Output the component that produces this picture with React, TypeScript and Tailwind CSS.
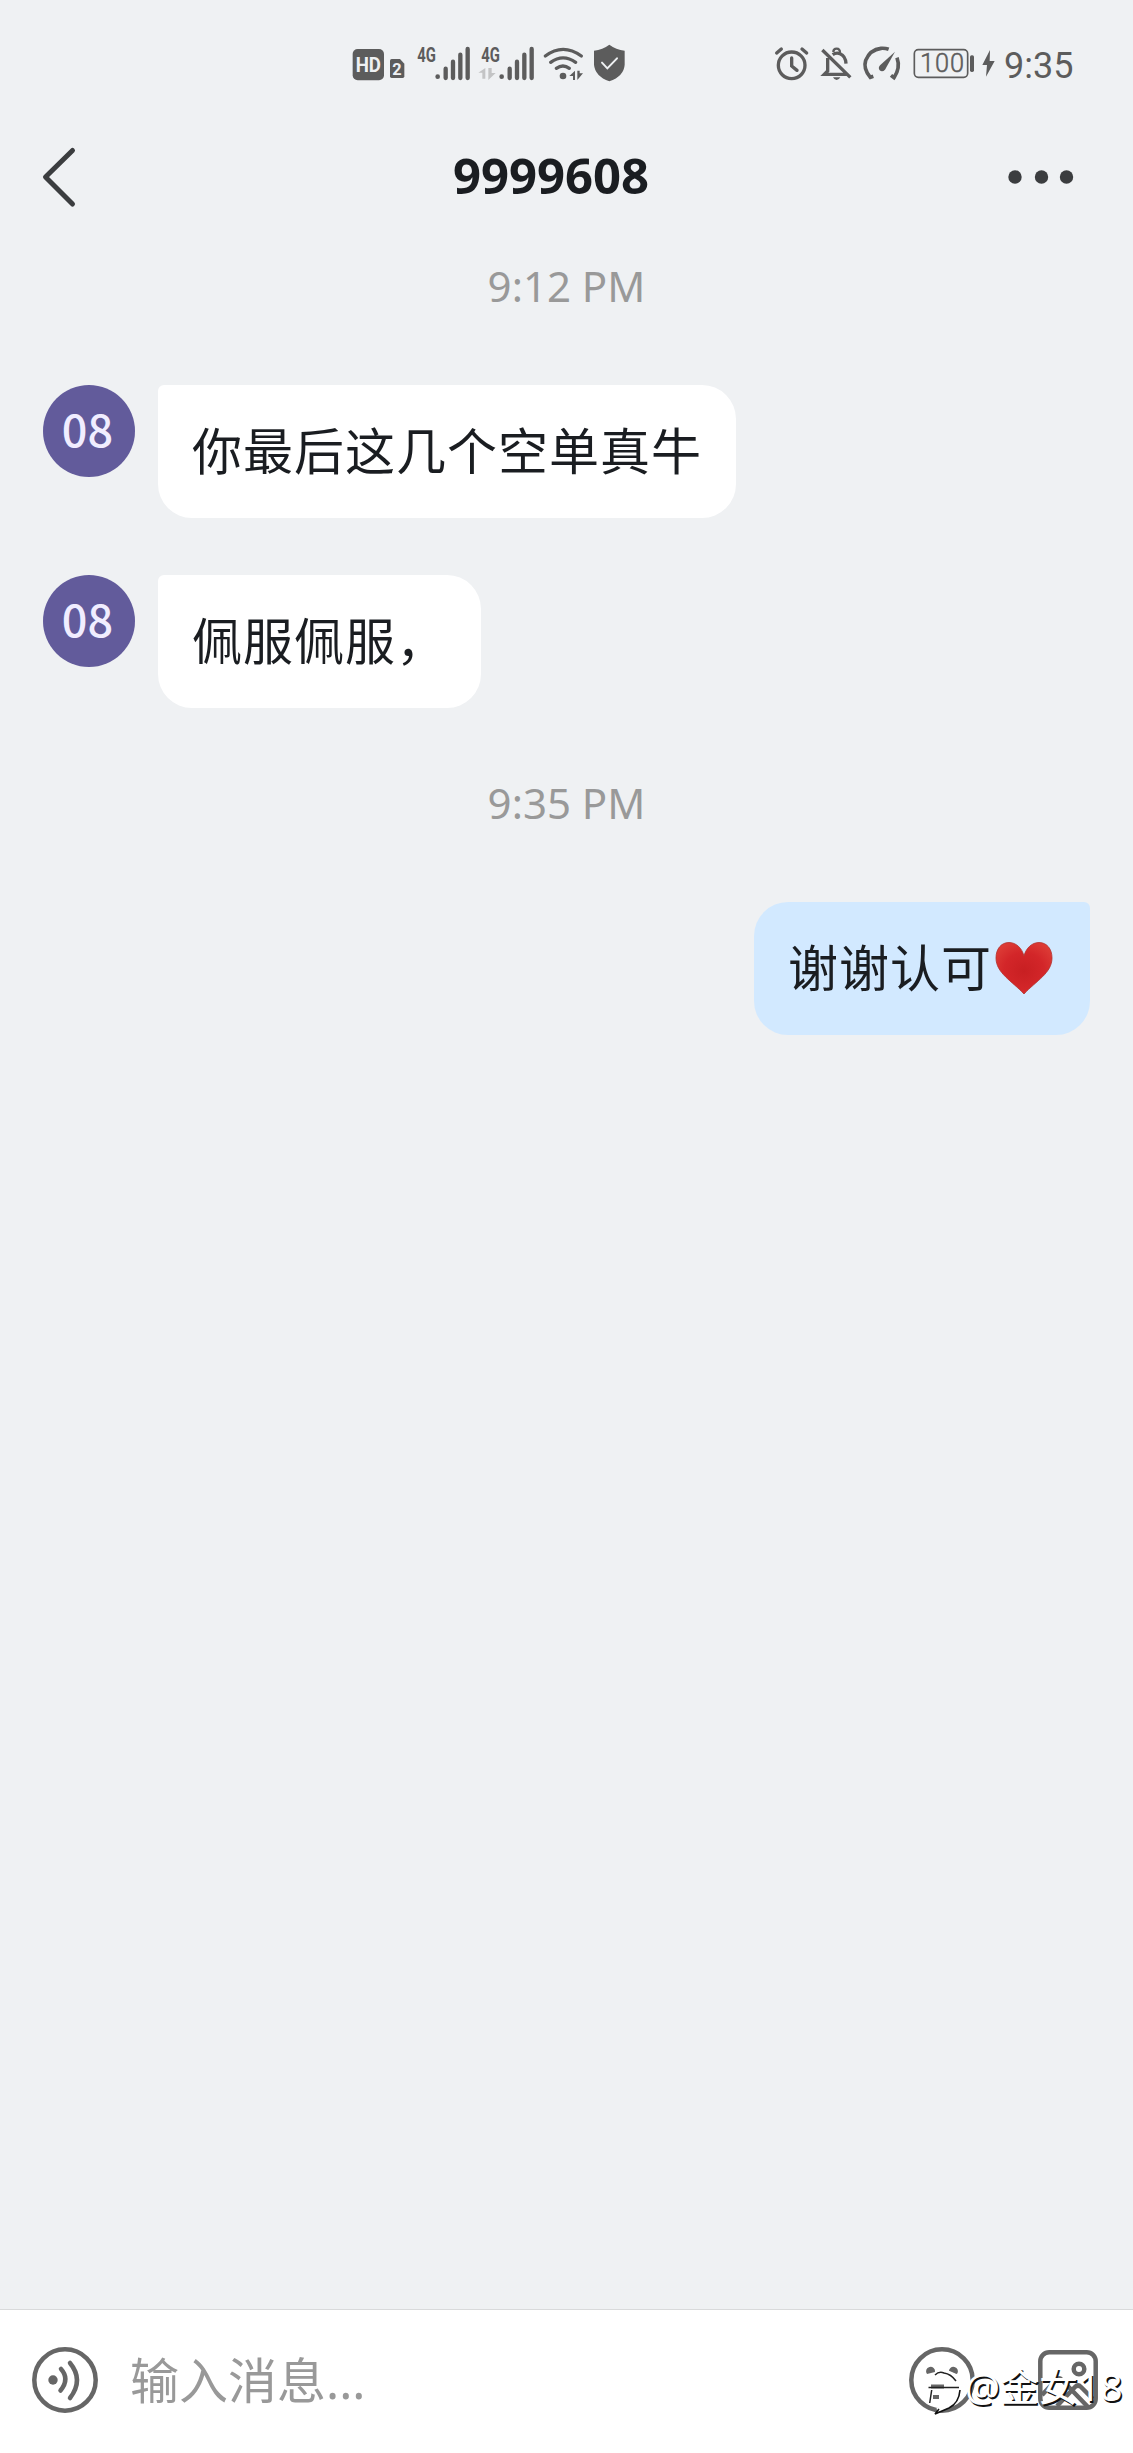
import React from "react";

type Message = { id: number; text: string; mine?: boolean; heart?: boolean };

const received: Message[] = [
  { id: 1, text: "你最后这几个空单真牛" },
  { id: 2, text: "佩服佩服，" },
];

const sent: Message[] = [{ id: 3, text: "谢谢认可", mine: true, heart: true }];

export default function App() {
  return (
    <div className="flex h-[2453px] w-[1133px] flex-col overflow-hidden bg-[#eff1f3] font-['Noto_Sans','Noto_Sans_CJK_SC',sans-serif] text-[#1a1d21]">
      <StatusBar />
      <Header title="9999608" />

      <main className="flex flex-1 flex-col">
        <TimeLabel>9:12 PM</TimeLabel>
        <div className="mt-[67px] flex flex-col gap-[57px]">
          {received.map((m) => (
            <MessageRow key={m.id} message={m} />
          ))}
        </div>
        <div className="mt-[63px]">
          <TimeLabel>9:35 PM</TimeLabel>
        </div>
        <div className="mt-[67px] flex flex-col">
          {sent.map((m) => (
            <MessageRow key={m.id} message={m} />
          ))}
        </div>
      </main>

      <InputBar />
    </div>
  );
}

/* status bar */
function StatusBar() {
  return (
    <div className="flex h-[100px] shrink-0 items-end text-[#5c5c5c]">
      <div className="ml-[350px] flex">
        {/* HD + sim 2 */}
        <svg className="mr-[4px] h-[70px] w-[58px]" viewBox="30 0 174 210" fill="currentColor">
          <rect x="38" y="57" width="94" height="94" rx="15" />
          <text x="85" y="125" textAnchor="middle" fontSize="60" fontWeight="700" textLength="76" lengthAdjust="spacingAndGlyphs" fill="#eff1f3" fontFamily="Roboto, sans-serif">HD</text>
          <path d="M155 87h25l13 14v38q0 5-5 5h-33q-5 0-5-5V92q0-5 5-5z" />
          <text x="171" y="136" textAnchor="middle" fontSize="49" fontWeight="700" fill="#eff1f3" fontFamily="Roboto, sans-serif">2</text>
        </svg>
        <Signal />
        <Signal data />
        {/* wifi */}
        <svg className="h-[70px] w-[50px]" viewBox="600 0 150 210" fill="none" stroke="currentColor" strokeWidth="10" strokeLinecap="round">
          <path d="M616 78Q669 38 724 78M632 97Q669 70 707 97M649 115Q669 101 688 115" />
          <circle cx="669" cy="138" r="10" fill="currentColor" stroke="none" />
          <path d="M705 122v28h-6v-12h-11zM712 122v28l17-20h-10v-8z" fill="currentColor" stroke="none" />
        </svg>
        {/* shield */}
        <svg className="h-[70px] w-[38px]" viewBox="750 0 114 210">
          <path d="M808 44Q828 59 854 62V104Q852 138 808 154Q765 138 762 104V62Q788 59 808 44Z" fill="currentColor" />
          <path d="M786 98l16 17 29-30" fill="none" stroke="#eff1f3" strokeWidth="6" strokeLinecap="round" />
        </svg>
      </div>

      <div className="ml-[142px] flex items-center">
        {/* alarm */}
        <svg className="h-[70px] w-[50px]" viewBox="30 0 150 210" fill="none" stroke="currentColor" strokeWidth="10" strokeLinecap="round">
          <circle cx="95" cy="106" r="40" />
          <path d="M95 84v24l16 13M50 69l14-12M140 69l-14-12" />
        </svg>
        {/* muted bell */}
        <svg className="h-[70px] w-[40px]" viewBox="180 0 120 210" fill="none" stroke="currentColor" strokeWidth="10">
          <path d="M187 60l84 82M203 84v39l-10 10h68M218 74Q228 67 240 71Q257 78 258 101" />
          <path d="M220 66q0-10 10-10t10 13" strokeWidth="7" />
          <path d="M219 142h22q-4 8-11 8t-11-8z" fill="currentColor" stroke="none" />
        </svg>
        {/* speed */}
        <svg className="h-[70px] w-[50px]" viewBox="300 0 150 210" fill="none" stroke="currentColor" strokeWidth="11">
          <path d="M340 139L331 142Q309 116 317 91Q330 59 363 55Q375 54 386 58" />
          <path d="M411 83Q422 114 402 143L393 136" />
          <path d="M405 65l-30 54q-8 9-16 2-6-8 2-16z" fill="currentColor" stroke="none" />
        </svg>
        {/* battery */}
        <svg className="h-[70px] w-[85px]" viewBox="450 0 255 210" fill="currentColor">
          <rect x="463" y="59" width="160" height="83" rx="12" fill="none" stroke="currentColor" strokeWidth="5" />
          <rect x="630" y="76" width="12" height="50" rx="5" />
          <text x="546" y="127" textAnchor="middle" fontSize="76" fontWeight="300" stroke="currentColor" strokeWidth="1.500" textLength="132" fontFamily="Roboto, sans-serif">100</text>
          <path d="M690 60l-23 45h14l-3 35 26-47h-15z" />
        </svg>
        <span className="mt-[2px] ml-[9px] font-['Roboto',sans-serif] text-[36px] leading-[68px]">9:35</span>
      </div>
    </div>
  );
}

function Signal({ data = false }: { data?: boolean }) {
  return (
    <svg className="h-[70px] w-[64px]" viewBox="216 0 192 210" fill="currentColor">
      <text x="260" y="95" textAnchor="middle" fontSize="58" fontWeight="700" textLength="56" lengthAdjust="spacingAndGlyphs" fontFamily="Roboto, sans-serif">4G</text>
      <circle cx="293" cy="140" r="7" />
      <path d="M317 116v28M339 95v49M361 74v70M383 57v87" stroke="currentColor" strokeWidth="13" strokeLinecap="round" />
      {data && <path d="M244 114v32h-9v-18h-12zM253 114v36l22-21h-12v-15z" fill="#c3c4c5" />}
    </svg>
  );
}

/* title row */
function Header({ title }: { title: string }) {
  return (
    <header className="flex h-[154px] shrink-0 items-center justify-between pr-[59px] pl-[40px] text-[#3b3d3f]">
      <svg className="h-[64px] w-[38px]" viewBox="0 0 38 64" fill="none" stroke="currentColor" strokeWidth="5" strokeLinecap="round" strokeLinejoin="round">
        <path d="M32.500 5.500L5.500 32L32.500 59" />
      </svg>
      <h1 className="mb-[5px] ml-[16px] text-[49px] leading-[66px] font-bold text-[#1a1d21]">{title}</h1>
      <svg className="h-[14px] w-[66px]" viewBox="0 0 66 14" fill="currentColor">
        <circle cx="7" cy="7" r="6.700" />
        <circle cx="33.500" cy="7" r="6.700" />
        <circle cx="58.500" cy="7" r="6.700" />
      </svg>
    </header>
  );
}

function TimeLabel({ children }: { children: React.ReactNode }) {
  return <div className="h-[64px] text-center text-[42px] leading-[64px] text-[#999999]">{children}</div>;
}

function MessageRow({ message }: { message: Message }) {
  if (message.mine) {
    return (
      <div className="flex justify-end pr-[43px]">
        <div className="flex h-[133px] items-center rounded-[34px] rounded-tr-[6px] bg-[#d2e9ff] pr-[37px] pb-[2px] pl-[34px] text-[50px] leading-[76px] tracking-[1px]">
          <span className="whitespace-nowrap">{message.text}</span>
          {message.heart && <Heart />}
        </div>
      </div>
    );
  }
  return (
    <div className="flex items-start gap-[23px] pl-[43px]">
      <div className="flex h-[92px] w-[92px] items-center justify-center rounded-full bg-[#625b9b] pr-[3px] pb-[7px] font-['Noto_Sans_CJK_SC',sans-serif] text-[45px] leading-none font-medium text-[#f0edff]">
        08
      </div>
      <div className="flex h-[133px] items-center rounded-[34px] rounded-tl-[6px] bg-white px-[34px] pb-[2px] text-[50px] leading-[76px] tracking-[1px] whitespace-nowrap">
        {message.text}
      </div>
    </div>
  );
}

function Heart() {
  return (
    <svg className="ml-[3px] h-[54px] w-[58px]" viewBox="0 0 58 54">
      <defs>
        <radialGradient id="heart" cx="0.5" cy="0.55" r="0.6">
          <stop offset="0" stopColor="#c81f22" />
          <stop offset="0.6" stopColor="#d32629" />
          <stop offset="1" stopColor="#dc3a35" />
        </radialGradient>
      </defs>
      <path
        d="M29 15C27 7 21 1.500 14 1.500C6 1.500 1 8 1 17C1 32 17 40 29 53C41 40 57 32 57 17C57 8 52 1.500 44 1.500C37 1.500 31 7 29 15Z"
        fill="url(#heart)"
        stroke="#b3302b"
        strokeWidth="0.800"
      />
    </svg>
  );
}

/* bottom input */
function InputBar() {
  return (
    <footer className="relative flex h-[144px] shrink-0 items-center border-t border-[#d9dadb] bg-white pr-[34px] pb-[3px] pl-[32px] text-[#666666]">
      <svg className="h-[66px] w-[66px]" viewBox="0 0 66 66" fill="none" stroke="currentColor" strokeWidth="4.500" strokeLinecap="round">
        <circle cx="33" cy="33" r="30.700" />
        <circle cx="21" cy="33" r="4.700" fill="currentColor" stroke="none" />
        <path d="M29 22Q38 32 28.500 43.500M38 16Q52 33 38 51" />
      </svg>
      <span className="ml-[32px] flex-1 text-[49px] leading-[72px] text-[#999999]">输入消息...</span>
      {/* emoji */}
      <svg className="h-[66px] w-[66px]" viewBox="0 0 66 66" fill="none" stroke="currentColor" strokeWidth="4.500">
        <circle cx="33" cy="33" r="30.700" />
        <path d="M18 27a4.500 4.500 0 1 1 8-2zM48 27a4.500 4.500 0 1 0-8-2z" fill="currentColor" stroke="none" />
        <path d="M22 39.500H35M24 50H30" strokeWidth="4" />
      </svg>
      {/* gallery */}
      <svg className="ml-[62px] h-[62px] w-[62px]" viewBox="0 0 62 62" fill="none" stroke="currentColor" strokeWidth="4.500">
        <rect x="3.300" y="3.300" width="55.400" height="55.400" rx="9" />
        <circle cx="42" cy="20" r="5.300" />
        <path d="M5 46L19 31Q22 28 25 31L51 58M20 57L38 38Q41 35 44 38L56 50" />
      </svg>

      {/* account mark lying over the icons */}
      <div className="absolute top-[53px] left-[927px] flex items-start text-white">
        <svg className="h-[54px] w-[36px]" viewBox="0 0 36 54" fill="none">
          <path d="M8 13Q13 8 22 10Q32 13 32 22.500M3 38L1.500 38" stroke="white" strokeWidth="4" />
          <path d="M32 26Q32 42 10 47" stroke="white" strokeWidth="4" />
          <path d="M8 12Q12 8 17 10Q24 11 29 18M1.500 24.500H32M4.700 27L2.700 40" stroke="#222222" strokeWidth="1.500" />
          <path d="M33 27Q32 40 22 45Q15 48 8 51L12 46" stroke="#111111" strokeWidth="1.600" />
        </svg>
        <span className="ml-[2px] text-[39px] leading-[46px] whitespace-nowrap [text-shadow:1.5px_1.5px_0_#111111]">@金女18</span>
      </div>
    </footer>
  );
}
